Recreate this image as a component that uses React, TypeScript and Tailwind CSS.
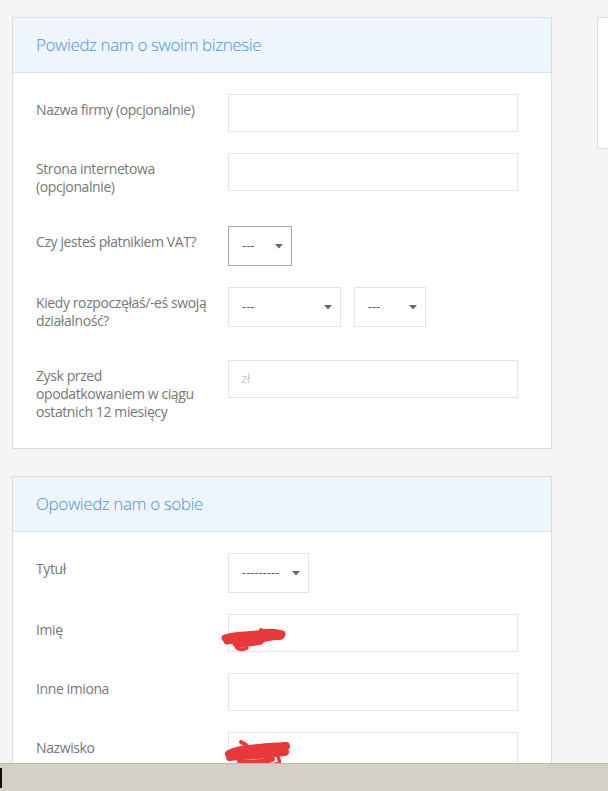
import React from 'react';

type Row = {
  label: string[];
  control: React.ReactNode;
};

function TextInput({ placeholder, children }: { placeholder?: string; children?: React.ReactNode }) {
  return (
    <div className="relative w-[290px] h-[38px] border border-[#e4e4e4] bg-white flex items-center px-[12px]">
      {placeholder && <span className="text-[13px] text-[#c8c8c8]">{placeholder}</span>}
      {children}
    </div>
  );
}

function Select({ value, width, active }: { value: string; width: string; active?: boolean }) {
  return (
    <div
      className={
        'h-[40px] bg-white border flex items-center justify-between pl-[13px] pr-[8px] ' +
        width +
        (active ? ' border-[#a8a8a8]' : ' border-[#e4e4e4]')
      }
    >
      <span className="text-[12px] text-[#555] tracking-[0.3px]">{value}</span>
      <svg width="8" height="5" viewBox="0 0 8 5">
        <path d="M0 0 L8 0 L4 4.5 Z" fill="#666" />
      </svg>
    </div>
  );
}

function Scribble({ variant }: { variant: 'a' | 'b' }) {
  if (variant === 'a') {
    return (
      <svg className="absolute left-[-8px] top-[8px]" width="70" height="36" viewBox="0 0 70 36">
        <g stroke="#e8383a" strokeLinecap="round" strokeLinejoin="round" fill="none">
          <path d="M4 15 C14 11 28 13 42 10 C50 8 56 10 61 11" strokeWidth="7" />
          <path d="M6 18 C18 16 32 18 50 14 C54 13 58 14 60 13" strokeWidth="7" />
          <path d="M14 21 C20 23 30 21 40 19" strokeWidth="5" />
          <path d="M15 23 C16 27 22 27 26 25" strokeWidth="3.5" />
          <path d="M40 7 L44 9" strokeWidth="4" />
        </g>
      </svg>
    );
  }
  return (
    <svg className="absolute left-[-5px] top-[4px]" width="70" height="36" viewBox="0 0 70 36">
      <g stroke="#e8383a" strokeLinecap="round" strokeLinejoin="round" fill="none">
        <path d="M5 17 C16 11 30 12 44 10 C52 9 58 10 62 9" strokeWidth="8" />
        <path d="M6 20 C18 18 34 19 50 16 C56 15 60 16 61 15" strokeWidth="8" />
        <path d="M16 24 C26 27 36 26 48 22" strokeWidth="6" />
        <path d="M30 27 C36 31 44 30 52 27" strokeWidth="4" />
        <path d="M54 20 C56 24 56 28 52 31" strokeWidth="3.5" />
        <path d="M17 5 L22 8" strokeWidth="4" />
      </g>
    </svg>
  );
}

function FormRow({ row }: { row: Row }) {
  return (
    <div className="flex items-start">
      <div className="w-[192px] shrink-0 pt-[7px] pb-[9px] text-[14px] leading-[18px] tracking-[-0.4px] text-[#777] whitespace-nowrap">
        {row.label.map((line, i) => (
          <div key={i}>{line}</div>
        ))}
      </div>
      {row.control}
    </div>
  );
}

function Card({ title, rows, pad = true }: { title: string; rows: Row[]; pad?: boolean }) {
  return (
    <div className="bg-white border border-[#dcdcdc]">
      <div className="h-[55px] bg-[#eef5fc] border-b border-[#d8e2ec] flex items-center pl-[23px]">
        <h2 className="text-[17px] font-light tracking-[-0.4px] text-[#4a90dc]">{title}</h2>
      </div>
      <div className={'pl-[23px] pt-[21px] flex flex-col gap-[21px] ' + (pad ? 'pb-[18px]' : 'pb-[40px]')}>
        {rows.map((r, i) => (
          <FormRow key={i} row={r} />
        ))}
      </div>
    </div>
  );
}

export default function App() {
  const business: Row[] = [
    { label: ['Nazwa firmy (opcjonalnie)'], control: <TextInput /> },
    { label: ['Strona internetowa', '(opcjonalnie)'], control: <TextInput /> },
    { label: ['Czy jesteś płatnikiem VAT?'], control: <Select value="---" width="w-[64px]" active /> },
    {
      label: ['Kiedy rozpoczęłaś/-eś swoją', 'działalność?'],
      control: (
        <div className="flex gap-[13px]">
          <Select value="---" width="w-[113px]" />
          <Select value="---" width="w-[72px]" />
        </div>
      ),
    },
    {
      label: ['Zysk przed', 'opodatkowaniem w ciągu', 'ostatnich 12 miesięcy'],
      control: <TextInput placeholder="zł" />,
    },
  ];

  const personal: Row[] = [
    { label: ['Tytuł'], control: <Select value="---------" width="w-[81px]" /> },
    {
      label: ['Imię'],
      control: (
        <TextInput>
          <Scribble variant="a" />
        </TextInput>
      ),
    },
    { label: ['Inne imiona'], control: <TextInput /> },
    {
      label: ['Nazwisko'],
      control: (
        <TextInput>
          <Scribble variant="b" />
        </TextInput>
      ),
    },
  ];

  return (
    <div className="relative h-[791px] overflow-hidden bg-[#f5f5f5] font-['Open_Sans',sans-serif]">
      <div className="flex items-start gap-[45px] pl-[12px] pt-[17px]">
        <div className="w-[540px] shrink-0 flex flex-col gap-[27px]">
          <Card title="Powiedz nam o swoim biznesie" rows={business} />
          <Card title="Opowiedz nam o sobie" rows={personal} pad={false} />
        </div>
        <div className="w-[60px] shrink-0 h-[132px] bg-white border border-[#dcdcdc]" />
      </div>

      {/* pasek stanu przeglądarki */}
      <div className="absolute left-0 right-0 bottom-0 h-[28px] bg-[#d4d0c8] border-t border-[#bdb9b1]">
        <div className="absolute left-0 top-[4px] w-[2px] h-[20px] bg-[#111]" />
      </div>
    </div>
  );
}
